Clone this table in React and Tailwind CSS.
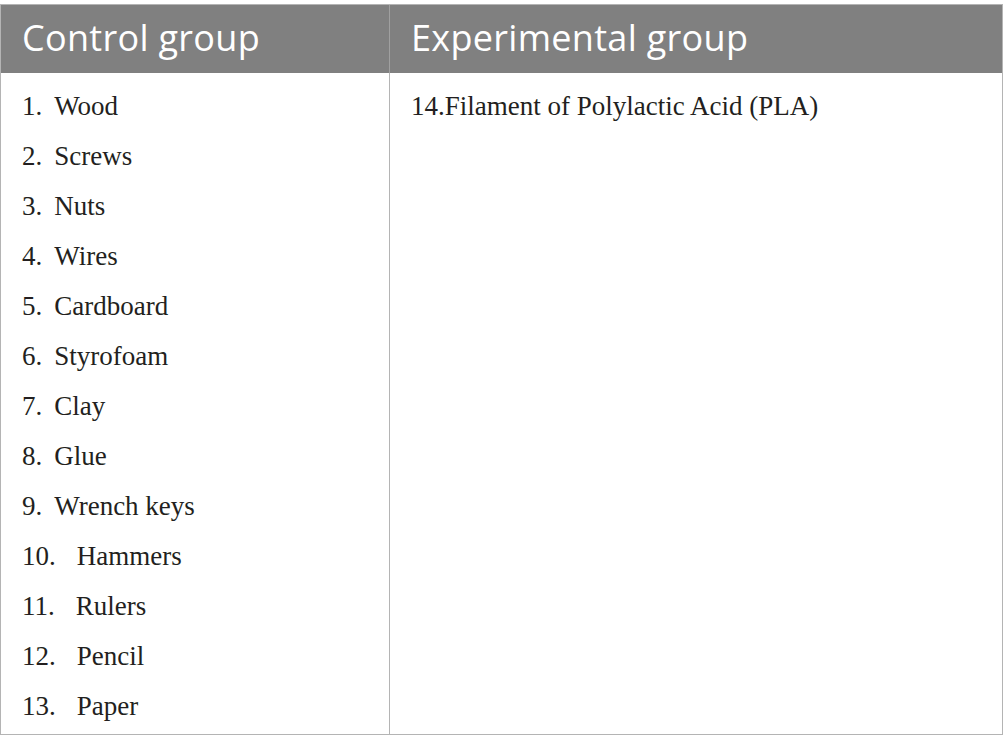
const controlItems = [
  "Wood",
  "Screws",
  "Nuts",
  "Wires",
  "Cardboard",
  "Styrofoam",
  "Clay",
  "Glue",
  "Wrench keys",
  "Hammers",
  "Rulers",
  "Pencil",
  "Paper",
];

const App = () => {
  return (
    <div className="w-[1004px] h-[753px] bg-white pt-[4px]">
      <div className="w-[1003px] border border-[#b4b4b4]">
        {/* header */}
        <div className="grid grid-cols-[389px_1fr] h-[68px] bg-[#808080] text-white font-['Open_Sans',sans-serif] text-[36px] tracking-[0.3px] leading-none">
          <div className="flex items-center pl-[21px] border-r border-[#a0a0a0] pb-[2px]">Control group</div>
          <div className="flex items-center pl-[21px] pb-[2px]">Experimental group</div>
        </div>

        {/* body */}
        <div className="grid grid-cols-[389px_1fr] font-['Liberation_Serif',serif] text-[27px] text-[#231f20]">
          <div className="border-r border-[#b4b4b4] pt-[8px] pb-[3px] pl-[21px]">
            {controlItems.map((item, i) => (
              <div key={item} className="h-[50px] leading-[50px] whitespace-nowrap">
                <span className={i < 9 ? "mr-[12px]" : "mr-[21px]"}>{i + 1}.</span>
                {item}
              </div>
            ))}
          </div>
          <div className="pt-[8px] pl-[21px]">
            <div className="h-[50px] leading-[50px] whitespace-nowrap">14.Filament of Polylactic Acid (PLA)</div>
          </div>
        </div>
      </div>
    </div>
  );
};

export default App;
